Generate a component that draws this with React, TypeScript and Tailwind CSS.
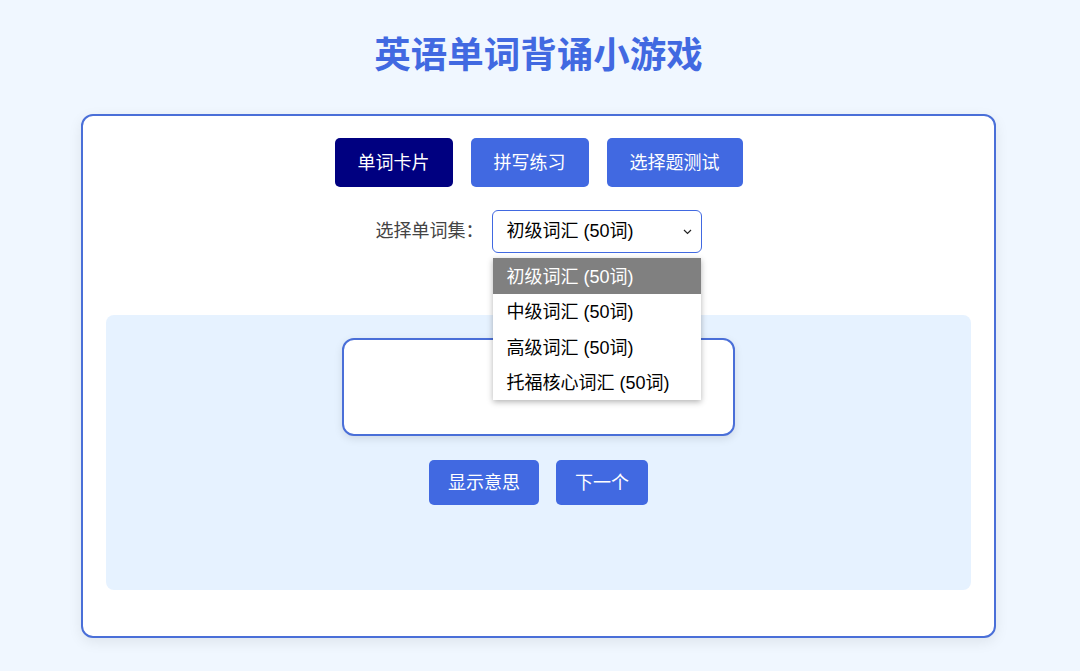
import { useState } from "react";

const sets = ["初级词汇 (50词)", "中级词汇 (50词)", "高级词汇 (50词)", "托福核心词汇 (50词)"];
const modes = ["单词卡片", "拼写练习", "选择题测试"];

export default function App() {
  const [mode, setMode] = useState(0);
  const [picked, setPicked] = useState(0);
  const [open, setOpen] = useState(true);

  return (
    <div className="min-h-[671px] w-full bg-[#f0f7ff] pt-[34px] pr-[3px] font-['Liberation_Sans','Noto_Sans_CJK_SC',sans-serif] text-[#333]">
      <h1 className="text-center text-[36.5px] font-bold leading-[43px] text-[#4169e1]">
        英语单词背诵小游戏
      </h1>

      <div className="mx-auto mt-[37px] w-[915px] rounded-[12px] border-2 border-[#4a6fd8] bg-white px-[23px] pt-[22px] pb-[46px] shadow-[0_4px_14px_rgba(0,0,0,0.08)]">
        {/* mode tabs */}
        <div className="flex justify-center gap-[18px]">
          {modes.map((m, i) => (
            <button
              key={m}
              onClick={() => setMode(i)}
              className={
                "h-[49px] rounded-[5px] px-[23px] pt-[2px] text-[18px] text-white " +
                (mode === i ? "bg-[#000080]" : "bg-[#4169e1]")
              }
            >
              {m}
            </button>
          ))}
        </div>

        {/* word set select */}
        <div className="mt-[23px] flex items-center justify-center gap-[8px]">
          <span className="text-[18px] text-[#444]">选择单词集：</span>
          <div className="relative">
            <button
              onClick={() => setOpen(!open)}
              className="flex h-[43px] w-[210px] items-center justify-between rounded-[6px] border border-[#4169e1] bg-white pl-[14px] pr-[9px] text-left text-[18px] text-black"
            >
              <span>{sets[picked]}</span>
              <svg width="9" height="6" viewBox="0 0 9 6" fill="none">
                <path d="M1 1l3.5 3.5L8 1" stroke="#222" strokeWidth="1.2" />
              </svg>
            </button>
            {open ? (
              <ul className="absolute left-[1px] top-[48px] z-10 w-[208px] bg-white shadow-[0_2px_6px_rgba(0,0,0,0.3)]">
                {sets.map((s, i) => (
                  <li
                    key={s}
                    onClick={() => {
                      setPicked(i);
                      setOpen(false);
                    }}
                    className={
                      "flex h-[35.5px] items-center px-[14px] pt-[3px] text-[18px] whitespace-nowrap " +
                      (i === picked ? "bg-[#808080] text-white" : "text-black")
                    }
                  >
                    {s}
                  </li>
                ))}
              </ul>
            ) : null}
          </div>
        </div>

        {/* game area */}
        <div className="mt-[62px] flex h-[275px] flex-col items-center rounded-[8px] bg-[#e6f2ff] pt-[23px]">
          <div className="h-[98px] w-[393px] rounded-[12px] border-2 border-[#4a6fd8] bg-white shadow-[0_3px_8px_rgba(0,0,0,0.1)]" />
          <div className="mt-[24px] flex gap-[17px]">
            <button className="h-[45px] rounded-[5px] bg-[#4169e1] px-[19px] pt-[2px] text-[18px] text-white">
              显示意思
            </button>
            <button className="h-[45px] rounded-[5px] bg-[#4169e1] px-[19px] pt-[2px] text-[18px] text-white">
              下一个
            </button>
          </div>
        </div>
      </div>
    </div>
  );
}
